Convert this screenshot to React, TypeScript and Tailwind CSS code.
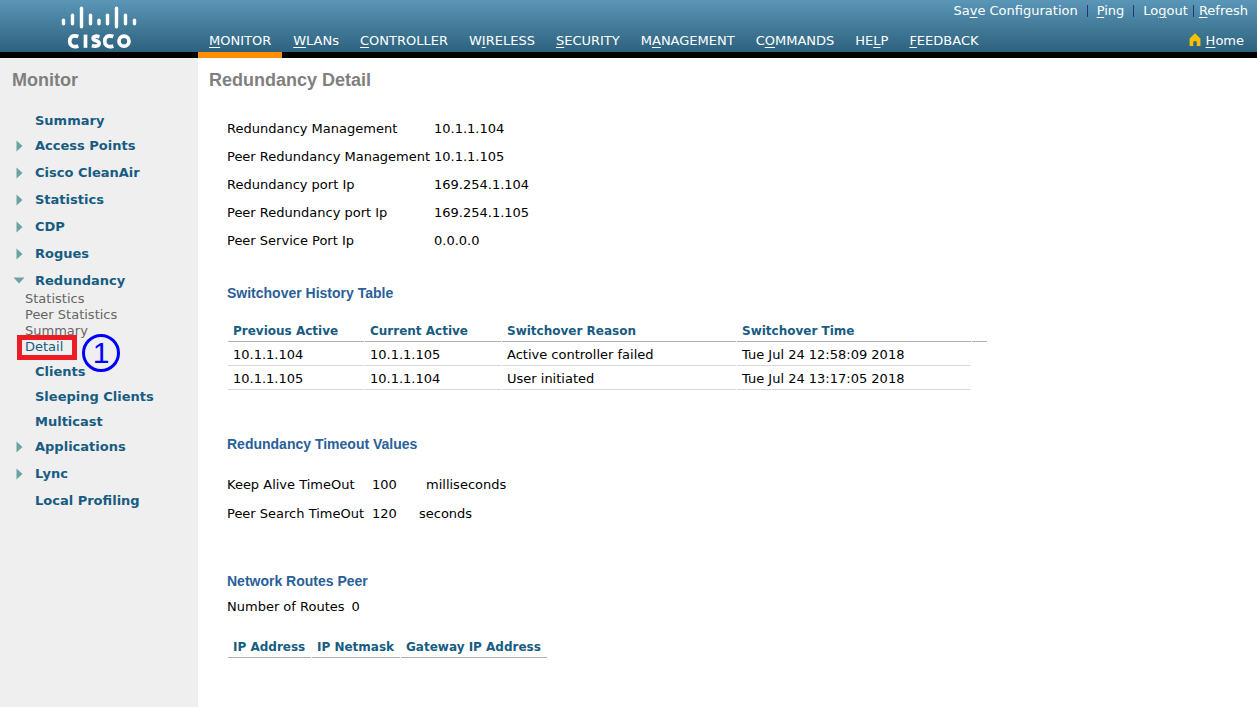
import React from "react";

type NavItem = { before: string; key: string; after: string };

const NAV: NavItem[] = [
  { before: "", key: "M", after: "ONITOR" },
  { before: "", key: "W", after: "LANs" },
  { before: "", key: "C", after: "ONTROLLER" },
  { before: "W", key: "I", after: "RELESS" },
  { before: "", key: "S", after: "ECURITY" },
  { before: "M", key: "A", after: "NAGEMENT" },
  { before: "C", key: "O", after: "MMANDS" },
  { before: "HE", key: "L", after: "P" },
  { before: "", key: "F", after: "EEDBACK" },
];

type MenuItem = { label: string; state: "leaf" | "closed" | "open"; children?: string[] };

const MENU: MenuItem[] = [
  { label: "Summary", state: "leaf" },
  { label: "Access Points", state: "closed" },
  { label: "Cisco CleanAir", state: "closed" },
  { label: "Statistics", state: "closed" },
  { label: "CDP", state: "closed" },
  { label: "Rogues", state: "closed" },
  { label: "Redundancy", state: "open", children: ["Statistics", "Peer Statistics", "Summary", "Detail"] },
  { label: "Clients", state: "leaf" },
  { label: "Sleeping Clients", state: "leaf" },
  { label: "Multicast", state: "leaf" },
  { label: "Applications", state: "closed" },
  { label: "Lync", state: "closed" },
  { label: "Local Profiling", state: "leaf" },
];

const DETAILS = [
  ["Redundancy Management", "10.1.1.104"],
  ["Peer Redundancy Management", "10.1.1.105"],
  ["Redundancy port Ip", "169.254.1.104"],
  ["Peer Redundancy port Ip", "169.254.1.105"],
  ["Peer Service Port Ip", "0.0.0.0"],
];

const HISTORY = [
  ["10.1.1.104", "10.1.1.105", "Active controller failed", "Tue Jul 24 12:58:09 2018"],
  ["10.1.1.105", "10.1.1.104", "User initiated", "Tue Jul 24 13:17:05 2018"],
];

function Shortcut({ before, letter, after }: { before: string; letter: string; after: string }) {
  return (
    <>
      {before}
      <span className="underline underline-offset-2">{letter}</span>
      {after}
    </>
  );
}

const BARS = [
  [63.5, 19, 25],
  [72.5, 14, 25],
  [81.5, 7, 28],
  [90.5, 14, 25],
  [99, 19, 25],
  [107.5, 14, 25],
  [116.5, 7, 28],
  [125.5, 14, 25],
  [134.5, 19, 25],
];

function Logo() {
  return (
    <svg width="76" height="44" viewBox="61 5 76 44" fill="none" stroke="#fff" role="img" aria-label="Cisco">
      <g strokeWidth="3.4" strokeLinecap="round">
        {BARS.map(([x, top, bottom]) => (
          <path key={x} d={`M${x} ${top + 1.2}V${bottom - 1.2}`} />
        ))}
      </g>
      <g strokeWidth="3.7">
        <path d="M78.3 36.6C72 34.2 69.7 38 69.7 41.2S72 48.2 78.3 45.9" />
        <path d="M85.5 34.6V47.8" />
        <path d="M99.5 36.7C95.5 35.6 93 36.4 93.2 38.5C93.5 41.2 99.2 40.2 99.1 43.4C99 46.4 95 46.5 91.8 45.7" />
        <path d="M113.3 36.6C107 34.2 104.7 38 104.7 41.2S107 48.2 113.3 45.9" />
        <circle cx="124" cy="41.2" r="5" />
      </g>
    </svg>
  );
}

function Header() {
  return (
    <header className="flex h-[58px] border-b-[6px] border-black bg-linear-to-b from-[#5a96b7] to-[#2d627e] text-[13px] leading-4 whitespace-nowrap text-white">
      <div className="w-[198px] shrink-0 pt-[5px] pl-[61px]">
        <Logo />
      </div>
      <div className="flex grow flex-col justify-between pt-[3px]">
        <div className="flex items-center justify-end pr-[9px]">
          <a href="#"><Shortcut before="Sa" letter="v" after="e Configuration" /></a>
          <span className="mx-[9px] h-3 w-px bg-[#2c3478]" />
          <a href="#"><Shortcut before="" letter="P" after="ing" /></a>
          <span className="mx-[9px] h-3 w-px bg-[#2c3478]" />
          <a href="#"><Shortcut before="Lo" letter="g" after="out" /></a>
          <span className="mx-[5px] h-3 w-px bg-[#2c3478]" />
          <a href="#"><Shortcut before="" letter="R" after="efresh" /></a>
        </div>
        <div className="flex items-start justify-between pr-[13px]">
          <nav className="-mb-[6px] flex items-start gap-px">
            {NAV.map((item, i) => (
              <a
                key={item.key + item.after}
                href="#"
                className={
                  i === 0
                    ? "border-b-[6px] border-[#ff8f00] px-[11px] pb-[3px]"
                    : "border-b-[6px] border-transparent px-[10px] pb-[3px]"
                }
              >
                <Shortcut before={item.before} letter={item.key} after={item.after} />
              </a>
            ))}
          </nav>
          <a href="#" className="flex items-center gap-[5px]">
            <svg width="12" height="14" viewBox="0 0 12 14" className="mb-0.5" aria-hidden="true">
              <path d="M6 .3L.6 5.4V13H4.2V9.2Q4.2 8 6 8T7.8 9.2V13H11.4V5.4Z" fill="#fcc000" />
            </svg>
            <span><Shortcut before="" letter="H" after="ome" /></span>
          </a>
        </div>
      </div>
    </header>
  );
}

function Arrow({ open }: { open: boolean }) {
  return open ? (
    <svg width="12" height="7" viewBox="0 0 12 7" className="mx-[13px]" aria-hidden="true">
      <path d="M.5 .5H11.5L6 6.5Z" fill="#6ba3a0" />
    </svg>
  ) : (
    <svg width="7" height="12" viewBox="0 0 7 12" className="ml-4" aria-hidden="true">
      <path d="M.5 .5V11.5L6.5 6Z" fill="#6ba3a0" />
    </svg>
  );
}

function Callout() {
  return (
    <>
      <span className="pointer-events-none absolute -top-1 left-[17px] h-[25px] w-[60px] border-5 border-[#ed1c24]" />
      <span className="pointer-events-none absolute -top-[5px] left-[82px] flex size-[38px] items-center justify-center rounded-full border-3 border-[#0000fe] font-['Liberation_Sans',sans-serif] text-[30px] leading-none text-[#0000fe]">
        1
      </span>
    </>
  );
}

function Sidebar() {
  return (
    <aside className="w-[198px] shrink-0 bg-[#efefef]">
      <h2 className="pt-[10px] pl-3 font-['Liberation_Sans',sans-serif] text-lg leading-6 font-bold text-[#7f7f7f]">
        Monitor
      </h2>
      <ul className="pt-4">
        {MENU.map((item) => (
          <li key={item.label}>
            <a
              href="#"
              className={
                item.state === "closed"
                  ? "mb-0.5 flex h-[25px] items-center text-[13px] leading-[25px] font-bold text-[#175c82]"
                  : "flex h-[25px] items-center text-[13px] leading-[25px] font-bold text-[#175c82]"
              }
            >
              <span className="w-[35px] shrink-0">
                {item.state !== "leaf" && <Arrow open={item.state === "open"} />}
              </span>
              {item.label}
            </a>
            {item.children && (
              <ul className="-mt-0.5 mb-1 text-[13px] leading-4 text-[#666]">
                {item.children.map((child) => (
                  <li key={child} className="relative pl-[25px]">
                    <a href="#" className={child === "Detail" ? "text-[#175c82]" : ""}>{child}</a>
                    {child === "Detail" && <Callout />}
                  </li>
                ))}
              </ul>
            )}
          </li>
        ))}
      </ul>
    </aside>
  );
}

function SectionTitle({ children }: { children: React.ReactNode }) {
  return (
    <h2 className="font-['Liberation_Sans',sans-serif] text-sm leading-5 font-bold text-[#2a6099]">{children}</h2>
  );
}

const TH = "h-6 border-b border-[#b0b0b0] px-[5px] pt-0.5 text-left text-xs font-bold text-[#175c82]";
const TD = "h-6 border-b border-[#d8d8d8] px-[5px] pt-0.5";

function Content() {
  return (
    <main className="min-w-0 grow bg-white pb-8 text-[13px] leading-4 text-black">
      <h1 className="pt-[10px] pl-[11px] font-['Liberation_Sans',sans-serif] text-lg leading-6 font-bold text-[#7f7f7f]">
        Redundancy Detail
      </h1>
      <div className="pl-[29px] whitespace-nowrap">
        <table className="mt-[23px] border-collapse">
          <tbody>
            {DETAILS.map(([label, value]) => (
              <tr key={label} className="h-7">
                <th scope="row" className="w-[207px] text-left font-normal">{label}</th>
                <td>{value}</td>
              </tr>
            ))}
          </tbody>
        </table>

        <section className="mt-7">
          <SectionTitle>Switchover History Table</SectionTitle>
          <table className="mt-[15px] table-fixed border-separate border-spacing-x-px border-spacing-y-0">
            <thead>
              <tr>
                <th className={`${TH} w-[136px]`}>Previous Active</th>
                <th className={`${TH} w-[136px]`}>Current Active</th>
                <th className={`${TH} w-[234px]`}>Switchover Reason</th>
                <th className={`${TH} w-[234px]`}>Switchover Time</th>
                <td className="w-[15px] border-b border-[#b0b0b0]" />
              </tr>
            </thead>
            <tbody>
              {HISTORY.map((row) => (
                <tr key={row[3]}>
                  {row.map((cell) => (
                    <td key={cell} className={TD}>{cell}</td>
                  ))}
                </tr>
              ))}
            </tbody>
          </table>
        </section>

        <section className="mt-11">
          <SectionTitle>Redundancy Timeout Values</SectionTitle>
          <table className="mt-4 border-collapse">
            <tbody>
              <tr className="h-[29px]">
                <th scope="row" className="w-[145px] text-left font-normal">Keep Alive TimeOut</th>
                <td className="w-[47px]">100</td>
                <td className="pl-[7px]">milliseconds</td>
              </tr>
              <tr className="h-[29px]">
                <th scope="row" className="text-left font-normal">Peer Search TimeOut</th>
                <td>120</td>
                <td>seconds</td>
              </tr>
            </tbody>
          </table>
        </section>

        <section className="mt-[43px]">
          <SectionTitle>Network Routes Peer</SectionTitle>
          <p className="mt-2 flex gap-[7px]">
            <span>Number of Routes</span>
            <span>0</span>
          </p>
          <table className="mt-[19px] border-separate border-spacing-x-px border-spacing-y-0">
            <thead>
              <tr>
                <th className={`${TH} w-[83px]`}>IP Address</th>
                <th className={`${TH} w-[88px]`}>IP Netmask</th>
                <th className={`${TH} w-[146px]`}>Gateway IP Address</th>
              </tr>
            </thead>
          </table>
        </section>
      </div>
    </main>
  );
}

export default function App() {
  return (
    <div className="flex min-h-screen flex-col font-['DejaVu_Sans',Verdana,sans-serif]">
      <Header />
      <div className="flex grow">
        <Sidebar />
        <Content />
      </div>
    </div>
  );
}
